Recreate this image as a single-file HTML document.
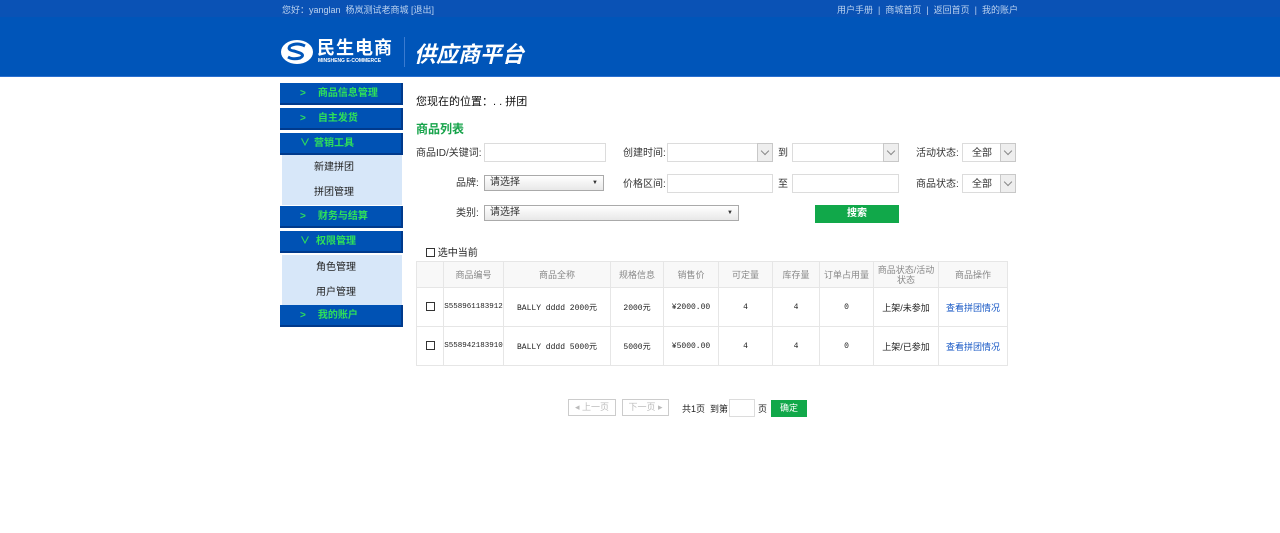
<!DOCTYPE html><html><head><meta charset="utf-8"><style>
*{margin:0;padding:0;box-sizing:border-box}
body{width:1280px;height:533px;background:#fff;font-family:"Liberation Sans","Noto Sans CJK SC",sans-serif;font-size:10px;color:#333;position:relative;overflow:hidden}
.a{position:absolute}
.top{left:0;top:0;width:1280px;height:17px;background:#0a52b5;color:#bcd3f0;font-size:9px}
.band{left:0;top:17px;width:1280px;height:60px;background:#0055b9;border-bottom:1px solid #2a6fcf}
.nav{left:280px;width:123px;height:22px;background:#0052b4;border-right:2px solid #003a8c;border-bottom:2px solid #003a8c;color:#2ee05a;font-size:10px;font-weight:bold;line-height:22px}
.sub{left:282px;width:120px;background:#d7e7f9;}
.sub div{height:25px;line-height:25px;padding-left:32px;font-size:10px;color:#222}
.lbl{font-size:10px;color:#333;text-align:right;line-height:12px}
.in{border:1px solid #dcdcdc;background:#fff;height:19px;line-height:15px}
.dd{border:1px solid #c8c8c8;background:#eee;width:16px;height:19px}
.dd:after{content:"";position:absolute;left:4px;top:4px;width:5px;height:5px;border-right:1px solid #888;border-bottom:1px solid #888;transform:rotate(45deg)}
table{border-collapse:collapse;font-size:8px;table-layout:fixed}
td{border:1px solid #e6e6e6;text-align:center;color:#222}
th{border:1px solid #e6e6e6;background:#f8f8f8;font-weight:normal;color:#888;font-size:9px;line-height:10px}
.cb{display:inline-block;width:9px;height:9px;border:1px solid #333}
.mono{font-family:"Liberation Mono",monospace;font-size:8px}
.sel{border:1px solid #aaa;height:16px;background:linear-gradient(#fff,#e8e8e8);padding:0 5px;line-height:14px}
</style></head><body>
<div class="a top"><span class="a" style="left:282px;top:3px">您好：yanglan &nbsp;杨岚测试老商城 [退出]</span><span class="a" style="left:837px;top:3px">用户手册 &nbsp;| &nbsp;商城首页 &nbsp;| &nbsp;返回首页 &nbsp;| &nbsp;我的账户</span></div>
<div class="a band">
<svg class="a" style="left:280px;top:22px" width="34" height="26" viewBox="0 0 34 26"><ellipse cx="17" cy="13" rx="16" ry="12" fill="#fff"/><path d="M25 7 Q17 3 10 7 Q7 11 14 12 L20 14 Q25 16 20 19 Q13 21 8 18" stroke="#0055b9" stroke-width="3" fill="none"/></svg>
<div class="a" style="left:317px;top:21px;color:#fff;font-size:18px;font-weight:bold;letter-spacing:1px;line-height:20px">民生电商</div>
<div class="a" style="left:318px;top:41px;color:#fff;font-size:5px;font-weight:bold">MINSHENG E-COMMERCE</div>
<div class="a" style="left:404px;top:20px;width:1px;height:30px;background:#3a7bd0"></div>
<div class="a" style="left:414px;top:20px;color:#fff;font-size:22px;font-weight:bold;font-style:italic">供应商平台</div>
</div>
<div class="a nav" style="top:83px"><span style="margin-left:20px">&gt;</span><span style="margin-left:12px">商品信息管理</span></div>
<div class="a nav" style="top:108px"><span style="margin-left:20px">&gt;</span><span style="margin-left:12px">自主发货</span></div>
<div class="a nav" style="top:133px"><span style="margin-left:20px">∨</span><span style="margin-left:4px">营销工具</span></div>
<div class="a sub" style="top:155px"><div>新建拼团</div><div>拼团管理</div></div>
<div class="a nav" style="top:206px"><span style="margin-left:20px">&gt;</span><span style="margin-left:12px">财务与结算</span></div>
<div class="a nav" style="top:231px"><span style="margin-left:20px">∨</span><span style="margin-left:6px">权限管理</span></div>
<div class="a sub" style="top:255px"><div style="padding-left:34px">角色管理</div><div style="padding-left:34px">用户管理</div></div>
<div class="a nav" style="top:305px"><span style="margin-left:20px">&gt;</span><span style="margin-left:12px">我的账户</span></div>

<div class="a" style="left:416px;top:93px;font-size:11px;color:#111">您现在的位置：. . 拼团</div>
<div class="a" style="left:416px;top:120px;font-size:12px;color:#16a34a;font-weight:bold">商品列表</div>

<div class="a lbl" style="left:416px;top:148px">商品ID/关键词:</div>
<div class="a in" style="left:484px;top:143px;width:122px"></div>
<div class="a lbl" style="left:623px;top:148px">创建时间:</div>
<div class="a in" style="left:667px;top:143px;width:106px"></div><div class="a dd" style="left:757px;top:143px"></div>
<div class="a lbl" style="left:778px;top:148px">到</div>
<div class="a in" style="left:792px;top:143px;width:107px"></div><div class="a dd" style="left:883px;top:143px"></div>
<div class="a lbl" style="left:916px;top:148px">活动状态:</div>
<div class="a in" style="left:962px;top:143px;width:54px;padding:2px 0 0 9px">全部</div><div class="a dd" style="left:1000px;top:143px"></div>

<div class="a lbl" style="left:456px;top:178px">品牌:</div>
<div class="a sel" style="left:484px;top:175px;width:120px">请选择<span style="float:right;font-size:6px">▼</span></div>
<div class="a lbl" style="left:623px;top:179px">价格区间:</div>
<div class="a in" style="left:667px;top:174px;width:106px"></div>
<div class="a lbl" style="left:778px;top:179px">至</div>
<div class="a in" style="left:792px;top:174px;width:107px"></div>
<div class="a lbl" style="left:916px;top:179px">商品状态:</div>
<div class="a in" style="left:962px;top:174px;width:54px;padding:2px 0 0 9px">全部</div><div class="a dd" style="left:1000px;top:174px"></div>

<div class="a lbl" style="left:456px;top:208px">类别:</div>
<div class="a sel" style="left:484px;top:205px;width:255px">请选择<span style="float:right;font-size:6px">▼</span></div>
<div class="a" style="left:815px;top:205px;width:84px;height:18px;background:#11a84a;color:#fff;text-align:center;line-height:18px;font-weight:bold">搜索</div>

<div class="a" style="left:426px;top:244px;font-size:10px;color:#222"><span class="cb" style="vertical-align:-1px"></span> 选中当前</div>

<table class="a" style="left:416px;top:261px;width:591px">
<colgroup><col style="width:27px"><col style="width:60px"><col style="width:107px"><col style="width:53px"><col style="width:55px"><col style="width:54px"><col style="width:47px"><col style="width:54px"><col style="width:65px"><col style="width:69px"></colgroup>
<tr style="height:26px"><th></th><th>商品编号</th><th>商品全称</th><th>规格信息</th><th>销售价</th><th>可定量</th><th>库存量</th><th>订单占用量</th><th>商品状态/活动状态</th><th>商品操作</th></tr>
<tr style="height:39px"><td><span class="cb"></span></td><td class="mono" style="font-size:7.5px">S558961183912</td><td class="mono">BALLY dddd 2000元</td><td class="mono">2000元</td><td class="mono">¥2000.00</td><td class="mono">4</td><td class="mono">4</td><td class="mono">0</td><td style="font-size:9px">上架/未参加</td><td style="color:#1456c4;font-size:9px">查看拼团情况</td></tr>
<tr style="height:39px"><td><span class="cb"></span></td><td class="mono" style="font-size:7.5px">S558942183910</td><td class="mono">BALLY dddd 5000元</td><td class="mono">5000元</td><td class="mono">¥5000.00</td><td class="mono">4</td><td class="mono">4</td><td class="mono">0</td><td style="font-size:9px">上架/已参加</td><td style="color:#1456c4;font-size:9px">查看拼团情况</td></tr>
</table>

<div class="a" style="left:568px;top:399px;width:48px;height:17px;border:1px solid #ccc;color:#bbb;font-size:9px;line-height:15px;text-align:center">◂ 上一页</div>
<div class="a" style="left:622px;top:399px;width:47px;height:17px;border:1px solid #ccc;color:#bbb;font-size:9px;line-height:15px;text-align:center">下一页 ▸</div>
<div class="a" style="left:682px;top:402px;font-size:9px;color:#222">共1页 &nbsp;到第</div>
<div class="a in" style="left:729px;top:399px;width:26px;height:18px"></div>
<div class="a" style="left:758px;top:402px;font-size:9px;color:#222">页</div>
<div class="a" style="left:771px;top:400px;width:36px;height:17px;background:#11a84a;color:#fff;font-size:9px;text-align:center;line-height:17px">确定</div>
</body></html>
